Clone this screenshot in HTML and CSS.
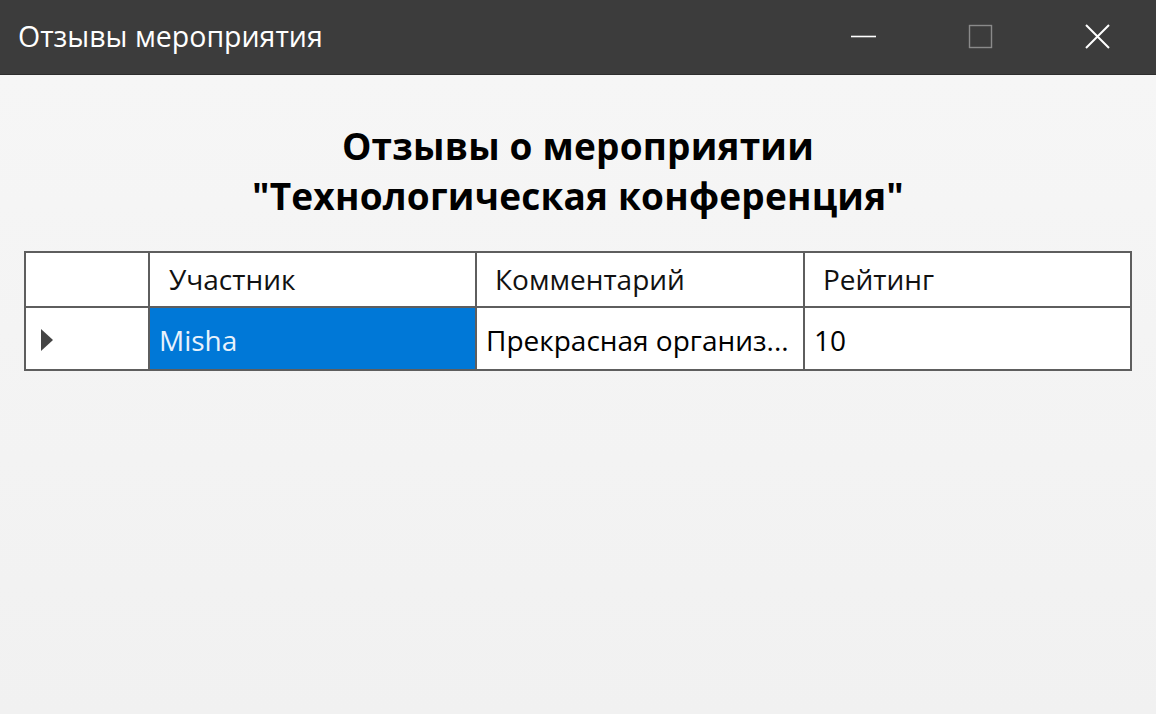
FILE: index.html
```html
<!DOCTYPE html>
<html lang="ru">
<head>
<meta charset="utf-8">
<title>Отзывы мероприятия</title>
<link rel="stylesheet" href="styles.css">
</head>
<body>
<div class="window">
  <header class="titlebar">
    <div class="title">Отзывы мероприятия</div>
    <div class="controls">
      <div class="ctl">
        <svg width="26" height="26" viewBox="0 0 26 26"><line x1="0" y1="12.5" x2="25" y2="12.5" stroke="#fff" stroke-width="1.6"/></svg>
      </div>
      <div class="ctl">
        <svg width="26" height="26" viewBox="0 0 26 26"><rect x="1.5" y="1.5" width="22" height="22" fill="none" stroke="#8a8a8a" stroke-width="1.4"/></svg>
      </div>
      <div class="ctl">
        <svg width="26" height="26" viewBox="0 0 26 26"><path d="M1 1 L24 24 M24 1 L1 24" stroke="#fff" stroke-width="2"/></svg>
      </div>
    </div>
  </header>
  <main class="content">
    <h1 class="heading">Отзывы о мероприятии<br>"Технологическая конференция"</h1>
    <div class="grid">
      <div class="row head">
        <div class="cell rh"></div>
        <div class="cell c1"><span class="ht">Участник</span></div>
        <div class="cell c2"><span class="ht">Комментарий</span></div>
        <div class="cell c3"><span class="ht">Рейтинг</span></div>
      </div>
      <div class="row data">
        <div class="cell rh"><span class="arrow"></span></div>
        <div class="cell c1 selected">Misha</div>
        <div class="cell c2">Прекрасная организ...</div>
        <div class="cell c3">10</div>
      </div>
    </div>
  </main>
</div>
</body>
</html>
```

FILE: styles.css
```css
* { box-sizing: border-box; }
html, body { margin: 0; padding: 0; }
body {
  width: 1156px;
  height: 714px;
  overflow: hidden;
  font-family: "Open Sans", "Noto Sans", sans-serif;
  background: #f3f3f3;
}
.window { display: flex; flex-direction: column; height: 714px; }
.titlebar {
  height: 75px;
  background: #3c3c3c;
  display: flex;
  align-items: center;
  justify-content: space-between;
  padding-left: 18px;
  border-bottom: 1px solid #2e2e2e;
}
.title {
  color: #fff;
  font-size: 28.5px;
  padding-bottom: 2px;
}
.controls { display: flex; height: 100%; }
.ctl {
  width: 117px;
  display: flex;
  align-items: center;
  justify-content: center;
}
.content {
  flex: 1;
  background: linear-gradient(#f6f6f6, #f1f1f1);
  padding: 46px 24px 0 24px;
}
.heading {
  margin: 0 0 30px 0;
  text-align: center;
  font-size: 37px;
  line-height: 50px;
  font-weight: 700;
  color: #000;
  letter-spacing: 0.2px;
}
.grid {
  width: 1108px;
  border: 2px solid #5e5e5e;
  background: #fff;
}
.row { display: grid; grid-template-columns: 124px 327px 328px 1fr; }
.row.head { height: 55px; border-bottom: 2px solid #5e5e5e; }
.row.data { height: 61px; }
.cell {
  display: flex;
  align-items: center;
  border-right: 2px solid #5e5e5e;
  font-size: 28px;
  color: #000;
  white-space: nowrap;
  overflow: hidden;
}
.cell.c3 { border-right: none; }
.head .cell { padding-left: 19px; padding-bottom: 2px; }
.head .cell.c2, .head .cell.c3 { padding-left: 18px; }
.data .cell { padding-left: 9px; padding-top: 2px; }
.data .cell.rh { padding-left: 15px; }
.cell.selected { background: #0078d7; color: #e8f2fc; padding-left: 9px; }
.ht { color: #111; }
.arrow {
  width: 0; height: 0;
  border-top: 11px solid transparent;
  border-bottom: 11px solid transparent;
  border-left: 12px solid #444;
}
```
